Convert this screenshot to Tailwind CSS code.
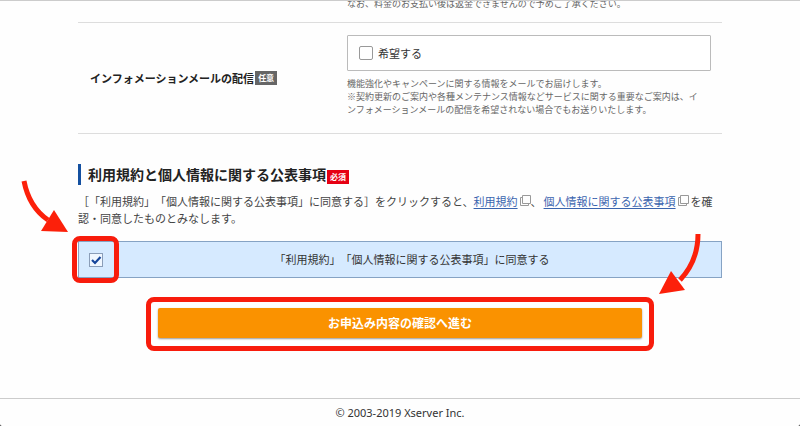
<!DOCTYPE html>
<html lang="ja">
<head>
    <meta charset="utf-8">
    <meta name="viewport" content="width=device-width, initial-scale=1">
    <title>Xserver</title>
    <script src="https://cdn.jsdelivr.net/npm/@tailwindcss/browser@4"></script>
</head>
<body class="bg-[#222] font-['Noto_Sans_CJK_JP',sans-serif] text-[11px] text-[#333] [text-spacing-trim:space-all]">

<div class="relative flex min-h-screen flex-col overflow-hidden rounded-b-[2px] border-t border-[#ccc] bg-[#fefefe]">

    <form class="mx-auto w-full max-w-[644px] grow">

        <div class="flex border-b border-[#ddd] pb-3">
            <div class="basis-[269px] shrink-0"></div>
            <p class="-mt-1 text-[9px] leading-[13px] text-[#666]">なお、料金のお支払い後は返金できませんので予めご了承ください。</p>
        </div>

        <div class="flex items-stretch border-b border-[#ddd]">
            <div class="flex shrink-0 basis-[269px] items-center gap-px pl-3">
                <span class="font-bold text-[#222]">インフォメーションメールの配信</span>
                <span class="bg-[#666] px-[3px] text-[8px] leading-[14px] font-bold text-white">任意</span>
            </div>
            <div class="grow pt-3 pr-[11px] pb-[17px]">
                <label class="flex h-9 items-center gap-[5px] rounded-[1px] border border-[#bbb] bg-white pl-[11px]">
                    <input type="checkbox" class="size-[14px] appearance-none rounded-[2px] border border-[#999] bg-white">
                    <span>希望する</span>
                </label>
                <p class="mt-[6px] text-[9px] leading-[13px] text-[#666]">機能強化やキャンペーンに関する情報をメールでお届けします。<br>※契約更新のご案内や各種メンテナンス情報などサービスに関する重要なご案内は、イ<br>ンフォメーションメールの配信を希望されない場合でもお送りいたします。</p>
            </div>
        </div>

        <div class="mt-[30px] flex items-center gap-px border-l-[3px] border-[#1450a0] pl-[7px]">
            <h2 class="text-[14px] leading-[21px] font-bold text-[#222]">利用規約と個人情報に関する公表事項</h2>
            <span class="mt-1 bg-[#e60012] px-[3px] text-[8px] leading-[14px] font-bold text-white">必須</span>
        </div>

        <p class="mt-2 leading-[17px] text-[#444]">［「利用規約」「個人情報に関する公表事項」に同意する］をクリックすると、<a href="#" class="text-[#3a64ae] underline underline-offset-2">利用規約</a><svg class="ml-[2px] inline size-[11px] align-[0px]" viewBox="0 0 11 11" fill="none" stroke="#999"><path d="M2.5.5h8v8h-8zM2.5 2.5h-2v8h8v-2"/></svg>、<a href="#" class="ml-[2px] text-[#3a64ae] underline underline-offset-2">個人情報に関する公表事項</a><svg class="mx-[2px] inline size-[11px] align-[0px]" viewBox="0 0 11 11" fill="none" stroke="#999"><path d="M2.5.5h8v8h-8zM2.5 2.5h-2v8h8v-2"/></svg>を確認・同意したものとみなします。</p>

        <div class="relative mt-[14px]">
            <label class="flex h-[37px] items-center border border-[#86a3c4] bg-[#d6eaff] pl-[10px]">
                <span class="grid shrink-0">
                    <input type="checkbox" checked class="peer col-start-1 row-start-1 size-[14px] appearance-none border border-[#8a9db8] bg-[#f0f7ff]">
                    <svg class="pointer-events-none invisible col-start-1 row-start-1 size-[14px] peer-checked:visible" viewBox="0 0 14 14" fill="none" stroke="#15459b" stroke-width="2.2"><path d="M3 7l3 3 5.500-6"/></svg>
                </span>
                <span class="grow text-center">「利用規約」「個人情報に関する公表事項」に同意する</span>
            </label>
            <span class="pointer-events-none absolute -top-[5px] -left-[6px] size-[47px] rounded-[8px] border-[5px] border-[#f81c0c]"></span>
        </div>

        <div class="mx-[68px] mt-[19px] rounded-[8px] border-[5px] border-[#f81c0c] px-[7px] pt-[6px] pb-[8px]">
            <button type="submit" class="block h-[30px] w-full rounded-[2px] bg-[#fa9200] text-[12px] font-bold text-white shadow-[0_1px_2px_#999]">お申込み内容の確認へ進む</button>
        </div>

    </form>

    <footer class="border-t border-[#ccc] text-center font-['Noto_Sans',sans-serif] text-[11px] leading-[27px]">© 2003-2019 Xserver Inc.</footer>

    <!-- pointers to the checkbox and the submit button -->
    <div class="pointer-events-none absolute inset-x-0 top-0 mx-auto max-w-[800px]">
        <svg class="block w-full" viewBox="0 0 800 425" fill="none" stroke="#fc200a" stroke-width="5">
            <path d="M24 180Q29 206 48 219"/>
            <path d="M54 209L68 231 41 230z" fill="#fc200a" stroke="none"/>
            <path d="M698 233Q698 260 680 279"/>
            <path d="M671 270L659 293 685 289z" fill="#fc200a" stroke="none"/>
        </svg>
    </div>

</div>

</body>
</html>
